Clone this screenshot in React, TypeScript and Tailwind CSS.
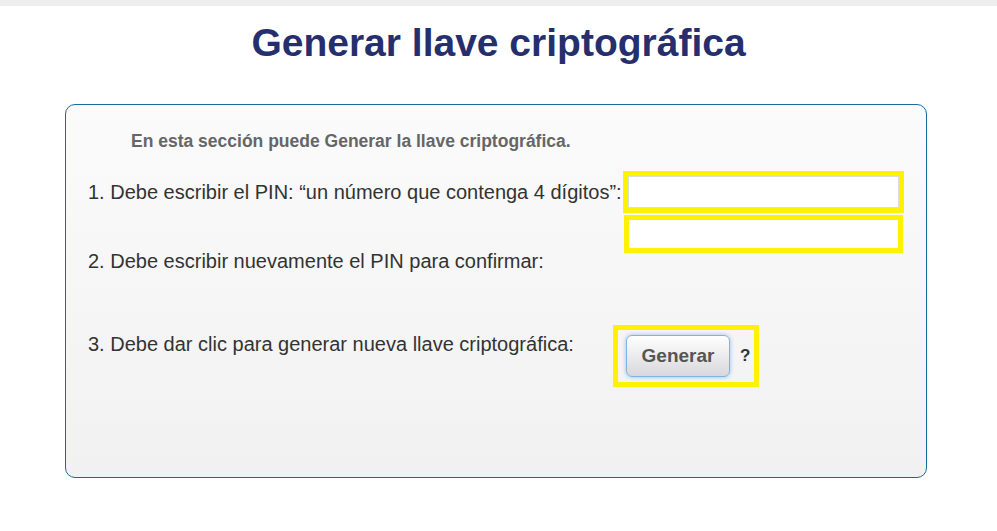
import React from "react";

export default function App() {
  return (
    <div className="min-h-[531px] bg-white font-['Liberation_Sans',Arial,sans-serif]">
      <div className="h-[6px] bg-[#eeeeee]" />
      <h1 className="mt-[15px] text-center text-[39px] font-bold leading-[44px] text-[#262f6e]">
        Generar llave criptográfica
      </h1>
      <div className="ml-[65px] mt-[39px] h-[374px] w-[862px] rounded-[10px] border border-[#1a6aa0] bg-gradient-to-b from-[#fbfbfb] to-[#f1f1f1]">
        <p className="ml-[65px] mt-[27px] text-[17.5px] font-bold leading-[18px] text-[#666666]">
          En esta sección puede Generar la llave criptográfica.
        </p>
        <div className="mt-[21px] flex h-[42px] items-center pl-[22px]">
          <span className="w-[535px] whitespace-nowrap text-[20px] leading-[24px] text-[#333333]">
            1. Debe escribir el PIN: “un número que contenga 4 dígitos”:
          </span>
          <div className="border-[5px] border-[#fff200]">
            <input className="block h-[32px] w-[271px] border border-[#dddddd] bg-white outline-none" />
          </div>
        </div>
        <div className="mt-[2px] flex items-start">
          <div className="w-[558px] pl-[22px] pt-[34px] text-[20px] leading-[24px] text-[#333333]">
            2. Debe escribir nuevamente el PIN para confirmar:
          </div>
          <div className="border-[5px] border-[#fff200]">
            <input className="block h-[28px] w-[269px] border border-white bg-white outline-none" />
          </div>
        </div>
        <div className="mt-[52px] flex items-start">
          <div className="w-[547px] pl-[22px] pt-[7px] text-[20px] leading-[24px] text-[#333333]">
            3. Debe dar clic para generar nueva llave criptográfica:
          </div>
          <div className="flex h-[62px] w-[146px] items-center border-[5px] border-[#fff200] pl-[8px]">
            <button className="h-[42px] w-[104px] rounded-[6px] border border-[#80b2e6] bg-gradient-to-b from-[#ffffff] to-[#d8d8dc] text-[19px] font-bold text-[#555555] shadow-[0_0_4px_rgba(110,165,230,0.7)]">
              Generar
            </button>
            <span className="ml-[10px] text-[17px] font-bold text-[#333333]">?</span>
          </div>
        </div>
      </div>
    </div>
  );
}
